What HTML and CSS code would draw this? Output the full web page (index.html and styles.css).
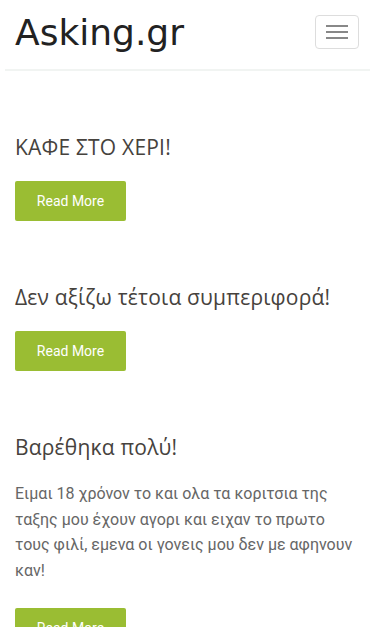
FILE: index.html
```html
<!DOCTYPE html>
<html lang="el">
<head>
    <meta charset="UTF-8">
    <meta name="viewport" content="width=device-width, initial-scale=1.0">
    <title>Asking.gr</title>
    <link rel="stylesheet" href="styles.css">
</head>
<body>
    <!-- Top navbar -->
    <nav class="navbar">
        <a class="brand" href="#">Asking.gr</a>
        <button class="navbar-toggler" type="button">
            <span class="bar"></span>
            <span class="bar"></span>
            <span class="bar"></span>
        </button>
    </nav>

    <div class="posts">
        <div class="post">
            <h2 class="post-title">ΚΑΦΕ ΣΤΟ ΧΕΡΙ!</h2>
            <a class="read-more" href="#">Read More</a>
        </div>

        <div class="post">
            <h2 class="post-title">Δεν αξίζω τέτοια συμπεριφορά!</h2>
            <a class="read-more" href="#">Read More</a>
        </div>

        <div class="post">
            <h2 class="post-title">Βαρέθηκα πολύ!</h2>
            <p class="post-text">Ειμαι 18 χρόνον το και ολα τα κοριτσια της ταξης μου έχουν αγορι και ειχαν το πρωτο τους φιλί, εμενα οι γονεις μου δεν με αφηνουν καν!</p>
            <a class="read-more" href="#">Read More</a>
        </div>
    </div>
</body>
</html>
```

FILE: styles.css
```css
body {
    margin: 0;
    font-family: Roboto, "Noto Sans", sans-serif;
    background-color: white;
    color: #666;
}

.navbar {
    display: flex;
    justify-content: space-between;
    align-items: center;
    height: 69px;
    margin: 0 5px;
    padding: 0 11px 0 10px;
    border-bottom: 2px solid #f1f4f2;
}

.brand {
    font-family: "DejaVu Sans", sans-serif;
    font-size: 36px;
    color: #222;
    text-decoration: none;
    margin-top: -4px;
}

.navbar-toggler {
    width: 44px;
    height: 34px;
    margin-top: -5px;
    padding: 0;
    border: 1px solid #ddd;
    border-radius: 4px;
    background: white;
    display: flex;
    flex-direction: column;
    justify-content: center;
    align-items: center;
    gap: 4px;
}

.bar {
    display: block;
    width: 22px;
    height: 2px;
    background-color: #888;
}

.posts {
    padding: 0 15px;
}

.post {
    padding-top: 63px;
}

.post-title {
    font-family: "Open Sans", sans-serif;
    font-weight: normal;
    font-size: 21px;
    line-height: 26px;
    letter-spacing: 0.2px;
    color: #46423d;
    margin: 0 0 21px;
}

.post-text {
    font-size: 16px;
    line-height: 25.5px;
    margin: 0 0 25px;
}

.read-more {
    display: inline-block;
    width: 111px;
    height: 40px;
    line-height: 40px;
    text-align: center;
    background-color: #9abd33;
    color: white;
    font-size: 14px;
    border-radius: 2px;
    text-decoration: none;
}
```
